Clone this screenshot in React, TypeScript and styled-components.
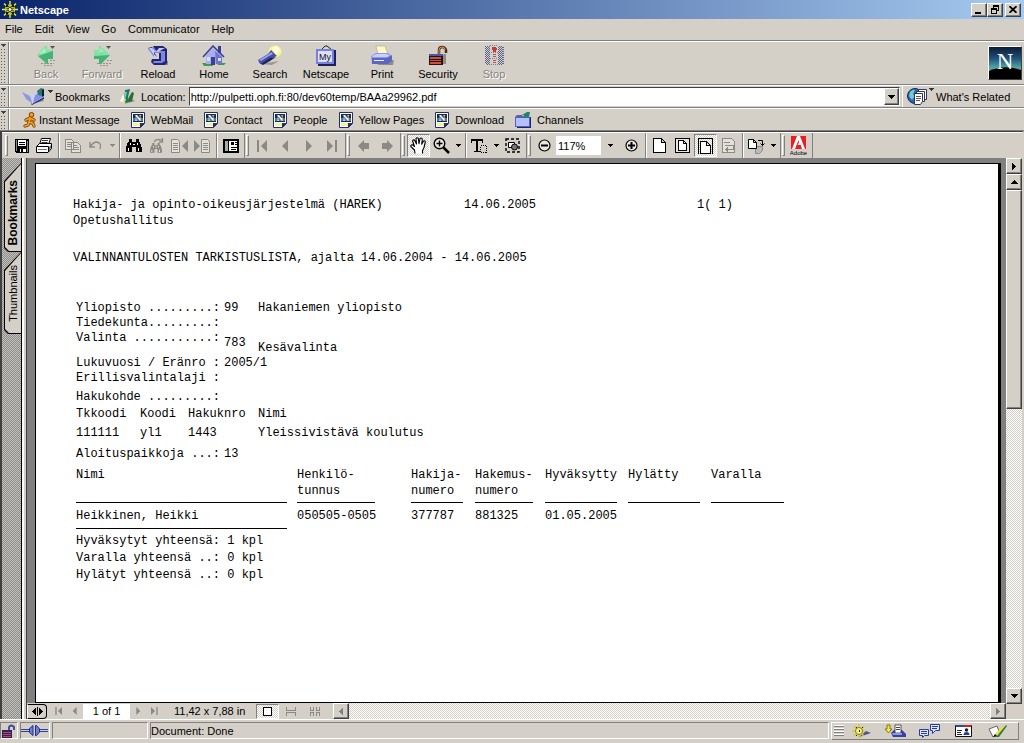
import React from "react";
import styled, { createGlobalStyle, css } from "styled-components";

const face = "#d4d0c8";
const shade = "#808080";
const dark = "#404040";

const raised = css`
  border: 1px solid;
  border-color: #fff ${dark} ${dark} #fff;
  box-shadow: inset -1px -1px 0 ${shade};
`;

const dither = css`
  background: repeating-conic-gradient(#fff 0 25%, ${face} 0 50%) 0 0 / 2px 2px;
`;

const GlobalStyle = createGlobalStyle`
  *, *::before, *::after { box-sizing: border-box; }
  body { margin: 0; background: ${face}; overflow: hidden; }
  body, button, input { font: 11px/14px "Liberation Sans", Arial, sans-serif; color: #000; }
  button { margin: 0; padding: 0; border: 0; background: none; white-space: nowrap; }
  input { margin: 0; padding: 0; border: 0; border-radius: 0; outline: 0; background: #fff; min-width: 0; }
  svg { display: block; flex: none; }
`;

/* ---------- window frame ---------- */

const Window = styled.div`
  display: flex;
  flex-direction: column;
  min-height: 100vh;
  background: ${face};
`;

const TitleBar = styled.header`
  display: flex;
  align-items: center;
  height: 19px;
  padding: 0 3px 0 2px;
  background: linear-gradient(90deg, #0a246a, #a6caf0);
`;

const Title = styled.h1`
  flex: 1;
  margin: 0 0 0 2px;
  font-size: 11px;
  line-height: 14px;
  color: #fff;
`;

const CaptionButton = styled.button<{ $gap?: boolean }>`
  ${raised}
  display: grid;
  place-items: center;
  width: 16px;
  height: 14px;
  margin-left: ${(p) => (p.$gap ? 2 : 0)}px;
  background: ${face};
`;

const MenuBar = styled.nav`
  display: flex;
  align-items: center;
  gap: 12px;
  height: 22px;
  padding: 0 5px 1px;
  border-bottom: 1px solid ${shade};
`;

/* ---------- Netscape toolbars ---------- */

const Bar = styled.div<{ $h: number }>`
  display: flex;
  align-items: center;
  height: ${(p) => p.$h}px;
  border-top: 1px solid #fff;
  border-bottom: 1px solid ${shade};
`;

const Grip = styled.button`
  display: flex;
  flex-direction: column;
  align-self: stretch;
  width: 9px;
  padding: 2px 0 1px 1px;
  border-right: 1px solid ${shade};
  box-shadow: 1px 0 0 #fff;
  &::after {
    content: "";
    flex: 1;
    width: 5px;
    margin-top: 2px;
    background: conic-gradient(from 0deg at 1px 1px, ${face} 75%, #5a5750 0) 0 0 / 3px 3px;
  }
`;

const NavButtons = styled.div`
  display: flex;
  flex: 1;
  padding-left: 9px;
`;

const NavButton = styled.button`
  display: flex;
  flex-direction: column;
  align-items: center;
  gap: 1px;
  width: 56px;
  &:disabled {
    color: #85827c;
    text-shadow: 1px 1px 0 #fff;
  }
`;

const Throbber = styled.a`
  ${raised}
  margin-right: 2px;
`;

const BookmarksButton = styled.button`
  display: flex;
  align-items: center;
  width: 98px;
  margin: 0 0 0 13px;
  gap: 2px;
`;

const HighDrop = styled.span`
  align-self: flex-start;
  padding-top: 2px;
`;

const LocationLabel = styled.label`
  display: flex;
  align-items: center;
  gap: 6px;
  margin-right: 3px;
`;

const LocationBox = styled.div`
  display: flex;
  flex: 1;
  height: 19px;
  border: 1px solid;
  border-color: ${dark} #fff #fff ${dark};
  background: #fff;
`;

const LocationInput = styled.input`
  flex: 1;
  padding-left: 1px;
`;

const DropButton = styled.button`
  ${raised}
  display: grid;
  place-items: center;
  width: 15px;
  background: ${face};
`;

const Related = styled.button`
  display: flex;
  align-items: center;
  align-self: stretch;
  gap: 2px;
  width: 122px;
  margin-left: 2px;
  padding-left: 4px;
  border-left: 1px solid #fff;
`;

const PersonalLinks = styled.div`
  display: flex;
  gap: 11px;
  padding-left: 14px;
`;

const PersonalLink = styled.a<{ $tight?: boolean }>`
  display: flex;
  align-items: center;
  gap: ${(p) => (p.$tight ? 2 : 6)}px;
  color: #000;
  text-decoration: none;
`;

/* ---------- Acrobat viewer ---------- */

const Viewer = styled.main`
  display: flex;
  flex: 1;
  flex-direction: column;
  border: 1px solid ${dark};
  border-width: 1px 2px 0 2px;
  border-right-color: ${face};
`;

const AcroBar = styled.div`
  display: flex;
  height: 26px;
  padding-left: 2px;
  border-top: 1px solid #fff;
`;

const AcroGroup = styled.div`
  display: flex;
  align-items: center;
  padding-right: 2px;
  border-right: 1px solid ${shade};
  &::before {
    content: "";
    align-self: stretch;
    width: 3px;
    margin: 2px 2px 2px 1px;
    border: 1px solid;
    border-color: #fff ${shade} ${shade} #fff;
  }
`;

const AcroButton = styled.button<{ $w?: number; $on?: boolean }>`
  display: grid;
  place-items: center;
  width: ${(p) => p.$w ?? 23}px;
  height: 23px;
  ${(p) =>
    p.$on &&
    css`
      ${dither}
      border: 1px solid;
      border-color: ${shade} #fff #fff ${shade};
    `}
`;

const AcroSep = styled.span`
  align-self: stretch;
  width: 5px;
  background: linear-gradient(90deg, transparent 2px, ${shade} 2px 3px, #fff 3px 4px, transparent 4px);
`;

const ZoomInput = styled.input`
  width: 45px;
  height: 19px;
  padding-left: 2px;
`;

const Work = styled.div`
  display: flex;
  flex: 1;
`;

const TabStrip = styled.div`
  width: 20px;
  padding: 5px 0 0 2px;
  border-right: 1px solid #000;
  background: repeating-conic-gradient(#8c8c8c 0 25%, #c4c1ba 0 50%) 0 0 / 2px 2px;
`;

const SideTab = styled.button<{ $h: number; $active?: boolean }>`
  position: relative;
  z-index: 0;
  display: flex;
  align-items: center;
  justify-content: flex-end;
  width: 17px;
  height: ${(p) => p.$h}px;
  padding: ${(p) => (p.$active ? "0 0 7px" : "0 0 12px")};
  flex-direction: column;
  font-weight: ${(p) => (p.$active ? 700 : 400)};
  font-size: ${(p) => (p.$active ? 12 : 11)}px;
  &::before,
  &::after {
    content: "";
    position: absolute;
    z-index: -1;
    inset: 0;
    background: #000;
    clip-path: polygon(100% 0, 0 18px, 0 calc(100% - 4px), 4px 100%, 100% 100%);
  }
  &::after {
    inset: 1px 0 1px 1px;
    background: ${face};
  }
  span {
    writing-mode: vertical-rl;
    transform: rotate(180deg);
  }
`;

const Splitter = styled.div`
  width: 5px;
  border-left: 2px solid #fff;
  border-right: 1px solid ${dark};
  background: ${face};
`;

const Center = styled.div`
  display: flex;
  flex: 1;
  flex-direction: column;
  min-width: 0;
`;

const Desk = styled.div`
  display: flex;
  flex: 1;
  padding: 5px 5px 0 8px;
  background: ${shade};
`;

const Paper = styled.article`
  flex: 1;
  min-width: 0;
  padding: 33px 0 0 37px;
  border: solid #000;
  border-width: 1px 3px 1px 1px;
  background: #fff;
  font: 12px/16px "Liberation Mono", "Courier New", monospace;
  white-space: pre;
`;

const ScrollColumn = styled.div`
  display: flex;
  flex-direction: column;
  width: 16px;
  padding-bottom: 15px;
`;

const ScrollButton = styled.button`
  ${raised}
  display: grid;
  place-items: center;
  width: 16px;
  height: 16px;
  background: ${face};
`;

const ScrollTrack = styled.div`
  ${dither}
  flex: 1;
`;

const ScrollThumb = styled.div`
  ${raised}
  height: 44%;
  background: ${face};
`;

const ScrollRow = styled.div`
  display: flex;
  flex: 1;
  margin-left: 6px;
`;

const PageNav = styled.div`
  display: flex;
  align-items: center;
  height: 16px;
`;

const PaneToggle = styled.button`
  display: grid;
  place-items: center;
  width: 20px;
  height: 15px;
  border: 1px solid #000;
  border-left-color: #fff;
  border-radius: 0 4px 4px 0;
  margin-right: 4px;
`;

const PageNavButton = styled.button<{ $w: number; $on?: boolean }>`
  display: grid;
  place-items: center;
  width: ${(p) => p.$w}px;
  height: 15px;
  ${(p) =>
    p.$on &&
    css`
      ${dither}
      border: 1px solid;
      border-color: ${shade} #fff #fff ${shade};
    `}
`;

const PageInput = styled.input`
  width: 47px;
  height: 15px;
  text-align: center;
`;

const PaperSize = styled.span`
  width: 94px;
  padding-left: 12px;
  white-space: nowrap;
`;

/* ---------- printed report ---------- */

const ReportHead = styled.header`
  display: grid;
  grid-template-columns: 391px 233px auto;
  margin-bottom: 21px;
`;

const ReportTitle = styled.h2`
  margin: 0 0 35px;
  font: inherit;
`;

const ReportBody = styled.section`
  padding-left: 3px;
`;

const Fields = styled.dl`
  margin: 0 0 4px;
`;

const Field = styled.div<{ $h?: number }>`
  display: grid;
  grid-template-columns: 148px 34px auto;
  height: ${(p) => p.$h ?? 15}px;
  line-height: 15px;
  dd {
    margin: 0;
    align-self: center;
  }
  dd + dd {
    align-self: end;
  }
`;

const CodeTable = styled.table`
  table-layout: fixed;
  width: 400px;
  border-collapse: collapse;
  margin-bottom: 5px;
  th,
  td {
    height: 19px;
    padding: 0;
    font-weight: 400;
    text-align: left;
  }
`;

const ResultTable = styled.table`
  table-layout: fixed;
  width: 708px;
  margin-top: 5px;
  border-spacing: 0;
`;

const HeadCell = styled.th<{ $w: number; $gap: number }>`
  width: ${(p) => p.$w}px;
  height: 36px;
  padding: 0 ${(p) => p.$gap}px 0 0;
  font-weight: 400;
  text-align: left;
  vertical-align: top;
  span {
    display: block;
    height: 36px;
    border-bottom: 1px solid #000;
  }
`;

const BodyCell = styled.td`
  height: 26px;
  padding: 0;
  vertical-align: top;
  span {
    display: block;
    height: 26px;
    padding-top: 5px;
  }
  &:first-child span {
    width: 211px;
    border-bottom: 1px solid #000;
  }
`;

const Sums = styled.div`
  padding-top: 4px;
  line-height: 17px;
`;

/* ---------- status bar ---------- */

const StatusBar = styled.footer`
  display: flex;
  align-items: center;
  gap: 2px;
  height: 24px;
  padding: 1px 5px 3px 0;
  border-top: 1px solid #fff;
`;

const StatusBox = styled.div<{ $w?: number }>`
  display: flex;
  align-items: center;
  ${(p) => (p.$w ? `width: ${p.$w}px;` : "flex: 1;")}
  height: 17px;
  border: 1px solid;
  border-color: ${shade} #fff #fff ${shade};
`;

const ComponentBar = styled.div`
  display: flex;
  align-items: center;
  height: 18px;
  width: 188px;
  border: 1px solid;
  border-color: #fff ${shade} ${shade} #fff;
  &::before {
    content: "";
    width: 10px;
    height: 12px;
    margin: 0 0 0 2px;
    background: repeating-linear-gradient(#fff 0 1px, ${shade} 1px 2px, ${face} 2px 3px);
  }
`;

const ComponentButton = styled.button`
  display: grid;
  place-items: center;
  width: 34px;
`;

/* ---------- icons ---------- */

type IconProps = { w: number; h: number; crisp?: boolean; children: React.ReactNode };
const Icon = ({ w, h, crisp, children }: IconProps) => (
  <svg width={w} height={h} viewBox={`0 0 ${w} ${h}`} shapeRendering={crisp ? "crispEdges" : undefined} aria-hidden="true">
    {children}
  </svg>
);

const Arrow = ({ dir, color = "#000" }: { dir: "up" | "down" | "left" | "right"; color?: string }) =>
  dir === "up" || dir === "down" ? (
    <Icon w={7} h={4} crisp>
      <path fill={color} d={dir === "down" ? "M0 0h7v1H6v1H5v1H4v1H3V3H2V2H1V1H0z" : "M3 0h1v1h1v1h1v1h1v1H0V3h1V2h1V1h1z"} />
    </Icon>
  ) : (
    <Icon w={4} h={7} crisp>
      <path fill={color} d={dir === "right" ? "M0 0h1v1h1v1h1v1h1v1H3v1H2v1H1v1H0z" : "M4 0v7H3V6H2V5H1V4H0V3h1V2h1V1h1V0z"} />
    </Icon>
  );

const SmallDrop = ({ color = "#000" }: { color?: string }) => (
  <Icon w={5} h={3} crisp>
    <path fill={color} d="M0 0h5v1H4v1H3v1H2V2H1V1H0z" />
  </Icon>
);

const Corner = () => <path fill="#555" d="M17 1h5l-2.500 3z" />;

const Wheel = () => (
  <Icon w={16} h={17}>
    <circle cx="8" cy="8.500" r="6.500" fill="#1c2a14" />
    <path stroke="#e8ec4c" strokeWidth="1.400" d="M8 0v17M0 8.500h16M2 2.500l12 12M14 2.500l-12 12" />
    <circle cx="8" cy="8.500" r="4.500" fill="none" stroke="#b8cc50" strokeWidth="1.400" />
    <circle cx="8" cy="8.500" r="2" fill="#fff" stroke="#2a3010" />
    <path fill="#151500" d="M4 4h2v2H4zM10 4h2v2h-2zM4 11h2v2H4zM10 11h2v2h-2z" />
  </Icon>
);

const navIcons: Record<string, React.ReactNode> = {
  Back: (
    <Icon w={26} h={21}>
      <path fill="none" stroke="#96938c" strokeDasharray="2 1" d="M8 18.500h13M11 20.500h8M17 15.500h6" />
      <path fill="#7fe3a4" d="M4 10 12 1l2 0v4h6v9h-5v5h-1z" />
      <path fill="#3aa56d" d="m5 11 15-5v8h-5v5h-1z" opacity=".8" />
      <path fill="#a9f3c2" d="m6 9 6-6 1 4z" />
      <Corner />
    </Icon>
  ),
  Forward: (
    <Icon w={26} h={21}>
      <path fill="none" stroke="#96938c" strokeDasharray="2 1" d="M8 18.500h14M11 20.500h9M18 15.500h5" />
      <path fill="#7fe3a4" d="M5 5h5V1h1l10 9-9 9h-2v-5H5z" />
      <path fill="#3aa56d" d="M5 11l16-1-9 9h-2v-5H5z" opacity=".8" />
      <path fill="#a9f3c2" d="M6 6h5V3l4 4z" />
      <Corner />
    </Icon>
  ),
  Reload: (
    <Icon w={26} h={21}>
      <path fill="#8f8c86" d="m8 18 3 2h12v-4h-3z" />
      <path fill="#23266f" d="M8 1h10l4 3v14l-2 2H9l-3-3 1-3h7V7H9l3 5L3 3l4-1 3 3z" />
      <path fill="#7d87e6" d="M5 3h4l3 3h8v10l-3 2H8l1-2h7V8H9v4L3 4z" />
      <path fill="#c5caff" d="M4 3h3l4 4 3-4h6l-7 4H9v3z" />
    </Icon>
  ),
  Home: (
    <Icon w={26} h={21}>
      <path fill="#3d9c46" d="M1 18h9l2 3H3zM16 18h9l-2 2h-6z" />
      <path fill="#a8aeee" d="M5 10 12 3l9 8v8H5z" />
      <path fill="#6e76c8" d="m14 6 7 6v7h-6z" />
      <path fill="#39408f" d="M17 1h3v7h-3zM10 12h4v8h-4z" />
      <path fill="none" stroke="#343c96" strokeWidth="1.500" d="m2 12 10-11 11 11" />
      <path fill="#d8dcff" d="M6 12h3v4H6zM17 13h3v3h-3z" />
    </Icon>
  ),
  Search: (
    <Icon w={26} h={21}>
      <ellipse cx="18" cy="6.500" rx="6.500" ry="6" fill="#f8f490" />
      <path fill="#fffee0" d="m15 3 5-2 3 4-4 5z" />
      <path fill="#9a9790" d="m4 19 18-3-7 4z" />
      <path fill="#454da8" d="m1 15 10-6 3-4 6 6-5 2-8 6-4 0z" />
      <path fill="#9ba4f2" d="m2 15 10-6 2-2 2 2-4 2-8 5z" />
      <path fill="#1e2258" d="m4 19 9-6 6-1-6 4-7 4z" />
    </Icon>
  ),
  Netscape: (
    <Icon w={26} h={21}>
      <path fill="none" stroke="#222" d="m8 5 4-4h2l5 4" />
      <path fill="#1d2153" d="M5 5h18v16H5z" />
      <path fill="#7781df" d="M3 4h18v15H3z" />
      <path fill="#dce0ff" d="M5 6h14v11H5z" />
      <text x="12" y="15" fontSize="9" fontFamily="Liberation Sans" textAnchor="middle" fill="#111">
        My
      </text>
    </Icon>
  ),
  Print: (
    <Icon w={26} h={21}>
      <path fill="#fff7c4" stroke="#aaa68c" strokeWidth=".6" d="M7 1h9l3 8H9z" />
      <path fill="#8f8c86" d="m6 18 4 2h14l1-5z" />
      <path fill="#8d96ee" d="m2 11 5-3h12l4 3v5l-4 3H3z" />
      <path fill="#cbd0ff" d="m3 11 5-2h10l3 2-4 1H4z" />
      <path fill="#5059b4" d="M3 13h15l5-3v6l-4 3H3z" opacity=".8" />
      <path fill="#eef" d="M5 15h10v1H5z" />
    </Icon>
  ),
  Security: (
    <Icon w={26} h={21}>
      <path fill="#8f8c86" d="M8 19h13V9h-2z" />
      <path fill="none" stroke="#4b2a14" strokeWidth="2.500" d="M14 10V5q0-3 3-3t4 3v3" />
      <path fill="none" stroke="#d49a5c" d="M14 9V5q0-3 3-3t3 3" />
      <path fill="#2b1010" d="M4 9h14v11H4z" />
      <path fill="#c5563f" d="M5 12h11v2H5zM5 15h11v1H5zM5 17h11v2H5z" />
      <path fill="#4754b4" d="M4 9h14v2H4z" />
    </Icon>
  ),
  Stop: (
    <Icon w={26} h={21}>
      <path fill="none" stroke="#5c608c" strokeDasharray="1 1" d="M4.500 1v18M6.500 1v19M8.500 1v19M18.500 1v19M20.500 1v19M22.500 2v17" />
      <path fill="none" stroke="#5c608c" strokeDasharray="1 1" d="M5.500 2v17M7.500 2v18M17.500 2v18M19.500 2v18M21.500 2v18" />
      <path fill="none" stroke="#7c7f9c" strokeDasharray="1 1" d="M9 .5h8M10 7.500h7M9 13.500h8M10 19.500h7" />
      <path fill="#c63a3a" d="M11 2h4v1h1v2h-1v2h-3V5h-1z" />
      <path stroke="#b0545c" strokeWidth="3" strokeDasharray="1 1" d="M13.500 9v4M13.500 15v4" />
    </Icon>
  ),
};

const NLogo = () => (
  <Icon w={32} h={32}>
    <defs>
      <linearGradient id="sky" x1="0" y1="0" x2="0" y2="1">
        <stop offset="0" stopColor="#0b1b33" />
        <stop offset=".35" stopColor="#1f4f78" />
        <stop offset=".65" stopColor="#54a8a4" />
      </linearGradient>
    </defs>
    <path fill="url(#sky)" d="M0 0h32v32H0z" />
    <path fill="#000" d="M0 24q16-7 32-1v9H0z" />
    <text x="16" y="22" fontSize="23" fontFamily="Liberation Serif" textAnchor="middle" fill="#fff">
      N
    </text>
  </Icon>
);

const NPage = () => (
  <Icon w={14} h={16}>
    <path fill="#fff" stroke="#26305c" d="M.5.5h13v11l-4 4h-9z" />
    <path fill="#1b2950" d="M2 2h10v8H2z" />
    <path fill="#46808a" d="M2 6h10v3H2z" />
    <path fill="#f3efa8" d="M2 11h7v3H2z" />
    <path fill="#26305c" d="m14 11-5 5v-5z" />
    <text x="7" y="9" fontSize="9" fontWeight="700" fontFamily="Liberation Serif" textAnchor="middle" fill="#fff">
      N
    </text>
  </Icon>
);

const Runner = () => (
  <Icon w={14} h={16}>
    <g fill="none" stroke="#7a3a00" strokeWidth="3.200" strokeLinecap="round" strokeLinejoin="round">
      <path d="M7.500 6 6 10l4 1.500 1 2.500M6 10l-1 3-3 1M3 8l4-2 4 2" />
    </g>
    <circle cx="8.500" cy="2.800" r="2.300" fill="#f6a01c" stroke="#7a3a00" />
    <g fill="none" stroke="#f6a01c" strokeWidth="1.800" strokeLinecap="round" strokeLinejoin="round">
      <path d="M7.500 6 6 10l4 1.500 1 2.500M6 10l-1 3-3 1M3 8l4-2 4 2" />
    </g>
  </Icon>
);

const BookmarkIcon = () => (
  <Icon w={24} h={17}>
    <path fill="#8a8780" d="m8 16 14-3-2-2z" />
    <path fill="#2c327c" d="m9 16 13-7 0 2-12 6z" />
    <path fill="#8d98e8" d="m0 4 8 4 3 8-7-5z" />
    <path fill="#c9d0ff" d="m9 8 6-4 6 5-11 7z" />
    <path fill="#8490e4" d="m13 7 4-2 4 4-10 6z" />
    <path fill="#247a72" d="m15 3 4-3 3 1-2 7-4-1z" />
    <path fill="#111a3a" d="m20 2 2-1 0 7-2 1z" />
  </Icon>
);

const LocationIcon = () => (
  <Icon w={15} h={17}>
    <path fill="#8a8780" d="m4 16 11-3-4-2z" />
    <path fill="#fff" d="m0 13 3-6 3 2-2 6z" />
    <path fill="#1c7a68" d="m5 2 5-1-2 8 2 4-4 2-2-2z" />
    <path fill="#7ad0b4" d="m5 4 2 0-2 8-1-1z" />
    <path fill="#2f6f2a" d="m9 9 3-5 2 1-2 8-3 1z" />
    <path fill="#e4e46a" d="m2 14 3-4 1 2-2 3z" />
  </Icon>
);

const RelatedIcon = () => (
  <Icon w={20} h={17}>
    <circle cx="8" cy="8" r="7.500" fill="#2d63b8" stroke="#14245c" />
    <path fill="#6fd0c8" d="M3 4q3-3 5-2L6 6l2 2-3 4-3-4z" />
    <g fill="#fff" stroke="#30345c">
      <path d="M11.500 1.500h8v10h-8z" />
      <path d="M9.500 3.500h8v10h-8z" />
      <path d="M7.500 5.500h8v8l-2 3h-6z" />
    </g>
    <path stroke="#555" d="M9 8.500h5M9 10.500h5M9 12.500h4" />
  </Icon>
);

const FolderIcon = () => (
  <Icon w={16} h={16}>
    <path fill="#1f2663" d="M2 5h14v11H2z" />
    <path fill="#5560b8" d="M0 5 2 3h5l2 2h6v10H0z" />
    <path fill="#b4bfff" d="M1 6h13v8H1z" />
    <path fill="#27806c" d="m8 6 1-3-2 0 5-3h3l-1 5-3 1z" />
  </Icon>
);

const gray = "#8b8984";

const SaveIcon = () => (
  <Icon w={14} h={14} crisp>
    <path fill="#000" d="M0 0h14v14H1l-1-1z" />
    <path fill="#fff" d="M3 1h8v6H3zM5 10h6v3H5z" />
    <path fill="#000" d="M4 3h6v1H4zM4 5h6v1H4zM6 10h2v3H6z" />
    <path fill="#888" d="M1 1h1v11H1zM12 2h1v11h-1z" />
  </Icon>
);
const PrinterIcon = () => (
  <Icon w={17} h={15}>
    <path fill="#fff" stroke="#000" d="M5.500.5h9l-2 6h-9z" />
    <path stroke="#000" strokeWidth=".8" d="M6 2.500h6M5.500 4.500h6" />
    <path fill="#fff" stroke="#000" d="m.5 8.500 3-3h12v5l-3.500 4H.5z" />
    <path fill="#777" d="m13 9 2-2v3l-2 3z" />
    <path stroke="#000" d="M1 8.500h11.500V14" fill="none" />
    <path stroke="#777" d="M2 11.500h9" />
  </Icon>
);
const CopyIcon = () => (
  <Icon w={16} h={14} crisp>
    <path fill="#e4e1da" stroke={gray} d="M.5.5h6l2 2v8h-8zM6.500 3.500h6l3 3v7h-9z" />
    <path stroke={gray} d="M2 3.500h4M2 5.500h4M2 7.500h4M8 6.500h4M8 8.500h6M8 10.500h6" />
  </Icon>
);
const UndoIcon = () => (
  <Icon w={13} h={9}>
    <path fill="none" stroke={gray} strokeWidth="1.300" d="M1 1v5h5M1 6q3-5 7-5 5 1 3 7" />
  </Icon>
);
const FindIcon = ({ again }: { again?: boolean }) => {
  const c = again ? gray : "#000";
  return (
    <Icon w={16} h={15} crisp={!again}>
      {again && <path fill="none" stroke={gray} strokeWidth="1.300" d="M5 4q2-4 8-1.500M13.500 0v4H10" />}
      <g transform={again ? "translate(1 5) scale(.75)" : "translate(0 1)"}>
        <path fill={c} d="M3 0h3v3h4V0h3v3h1l2 6v4h-6V8H6v5H0V9l2-6h1z" />
        <path fill="#fff" d="M2 9h1v3H2zM12 9h1v3h-1zM4 4h1v2H4zM11 4h1v2h-1zM7 5h2v1H7z" />
      </g>
    </Icon>
  );
};
const HitIcon = ({ next }: { next?: boolean }) => (
  <Icon w={17} h={14}>
    <g transform={next ? "translate(7 0)" : undefined}>
      <path fill="#e4e1da" stroke={gray} d="M.5.5h6l2 2v11h-8z" />
      <path stroke={gray} d="M2 4.500h5M2 6.500h5M2 8.500h5M2 10.500h5" />
    </g>
    <path fill={gray} d={next ? "M0 1v12l6-6z" : "M17 1v12l-6-6z"} />
  </Icon>
);
const PaneIcon = () => (
  <Icon w={16} h={14} crisp>
    <path fill="#fff" stroke="#000" strokeWidth="2" d="M1 1h14v12H1z" />
    <path fill="#000" d="M5 1h1v12H5zM8 3h3v3H8zM12 3h2v1h-2zM12 5h2v1h-2zM8 8h6v1H8zM8 10h5v1H8z" />
    <path fill="#aaa" d="M2 2h3v10H2z" />
  </Icon>
);
const Step = ({ dir, end, small }: { dir: "left" | "right"; end?: boolean; small?: boolean }) => (
  <svg width={small ? 8 : 11} height={small ? 8 : 12} viewBox="0 0 11 12" aria-hidden="true">
    <g fill={gray} transform={dir === "right" ? "translate(11 0) scale(-1 1)" : undefined}>
      {end && <path d="M0 0h2v12H0z" />}
      <path d={end ? "M10 0v12L4 6z" : "M8 0v12L2 6z"} />
    </g>
  </svg>
);
const FatArrow = ({ flip }: { flip?: boolean }) => (
  <Icon w={12} h={12}>
    <path fill={gray} transform={flip ? "translate(12 0) scale(-1 1)" : undefined} d="m0 6 6-6v3h5v6H6v3z" />
  </Icon>
);
const HandIcon = () => (
  <Icon w={17} h={17}>
    <path
      fill="#fff"
      stroke="#000"
      strokeWidth="1.100"
      strokeLinejoin="round"
      d="M5 16.500 4.500 13 .8 9.300Q.6 7.600 2.400 7.800L4.500 9.500 2.600 4Q3 2.200 4.600 3.200L6.500 7 6 1.500Q7 0 8.300 1.300L9 6.600 10 1.500Q11.400.4 12.300 2L11.700 7.300 13.600 4Q15.300 3.300 15.300 5L14 10.500 12.500 13.500V16.500"
    />
  </Icon>
);
const MagnifyIcon = () => (
  <Icon w={17} h={17}>
    <circle cx="6.500" cy="6.500" r="5.300" fill="#e8e6e0" stroke="#000" strokeWidth="1.400" />
    <path stroke="#000" strokeWidth="1.400" d="M3.500 6.500h6M6.500 3.500v6" />
    <path stroke="#000" strokeWidth="2.500" d="m10.500 10.500 5.500 5.500" />
  </Icon>
);
const TextSelectIcon = () => (
  <Icon w={17} h={16} crisp>
    <path fill="#000" d="M0 1h12v4h-1V3H7v10h2v1H3v-1h2V3H1v2H0z" />
    <path fill="none" stroke="#000" strokeDasharray="1 1" d="M9.500 7.500h6v7h-6z" />
  </Icon>
);
const GraphicSelectIcon = () => (
  <Icon w={15} h={15}>
    <path fill="none" stroke="#000" strokeWidth="1.400" strokeDasharray="3 2" d="M1 1h13v13H1z" />
    <path fill="#fff" stroke="#000" d="M3.500 4.500h6v5h-6z" />
    <circle cx="9.500" cy="9" r="3" fill="#777" stroke="#000" />
  </Icon>
);
const ZoomStep = ({ plus }: { plus?: boolean }) => (
  <Icon w={13} h={13}>
    <circle cx="6.500" cy="6.500" r="5.500" fill="#e8e6e0" stroke="#000" strokeWidth="1.200" />
    <path stroke="#000" strokeWidth="2" d={plus ? "M3 6.500h7M6.500 3v7" : "M3 6.500h7"} />
  </Icon>
);
const PageIcon = ({ kind }: { kind: "actual" | "fit" | "width" | "reflow" }) => (
  <Icon w={17} h={17} crisp>
    {kind === "actual" && <path fill="#fff" stroke="#000" d="M2.500 1.500h8l4 4v10h-12zM10.500 1.500v4h4" />}
    {kind === "fit" && (
      <>
        <path fill="#e8e6e0" stroke="#000" d="M1.500 1.500h14v14h-14z" />
        <path fill="#fff" stroke="#000" d="M4.500 3.500h5l3 3v7h-8zM9.500 3.500v3h3" />
      </>
    )}
    {kind === "width" && (
      <>
        <path fill="none" stroke="#000" d="M1.500 16.500v-15h14v15" />
        <path fill="#fff" stroke="#000" d="M3.500 16.500v-12h6l4 4v8zM9.500 4.500v4h4" />
      </>
    )}
    {kind === "reflow" && (
      <>
        <path fill="#e4e1da" stroke={gray} d="M2.500 1.500h9l3 3v11h-12z" />
        <path fill="none" stroke={gray} d="M4 5.500h6M5 8.500h8v4H6M8 10.500l-2 2 2 2" />
      </>
    )}
  </Icon>
);
const RotateIcon = () => (
  <Icon w={17} h={16}>
    <path fill="#bbb" stroke={gray} d="M7.500 8.500h7v4l-3 3h-4z" />
    <path fill="#fff" stroke="#000" d="M.5 1.500h5l3 3v6h-8zM5.500 1.500v3h3" />
    <path fill="none" stroke="#000" d="M10 2.500h4.500v5M12.500 5.500l2 2 2-2" />
  </Icon>
);
const AdobeIcon = () => (
  <Icon w={17} h={20}>
    <path fill="#ee1c25" d="M1 0h15v13H1z" />
    <path fill="#fff" d="M7 0h3l5 13h-3l-1.300-4H7.500L9 6.500 8.500 4 5 13H2z" />
    <text x="8.500" y="19" fontSize="6" fontFamily="Liberation Sans" textAnchor="middle" fill="#000">
      Adobe
    </text>
  </Icon>
);

const LockIcon = () => (
  <Icon w={15} h={14}>
    <path fill="none" stroke="#3a4193" strokeWidth="1.800" d="M8 7V3q2-3 5 0v3" />
    <path fill="#30206a" d="M1 6h10v8H1z" />
    <path fill="#c04a48" d="M2 8h8v1H2zM2 10h8v1H2zM2 12h8v1H2z" />
  </Icon>
);
const PlugIcon = () => (
  <Icon w={27} h={11}>
    <path stroke="#2f3fa0" d="M0 4.500h8M0 6.500h8M18 4.500h9M18 6.500h9" />
    <path fill="#6e80dc" stroke="#1e2a84" d="M8.500 3.500 12 .5v10L8.500 7.500zM14.500.5h1L18.500 4v3l-3 3.500h-1z" />
  </Icon>
);

const componentIcons = [
  {
    name: "Navigator",
    icon: (
      <Icon w={20} h={14}>
        <path fill="#4a52a8" d="m8 13 12-4-5-2z" />
        <path stroke="#d8cc20" strokeWidth="1.500" d="M8 0v14M1 7h14M3 2l10 10M13 2 3 12" />
        <circle cx="8" cy="7" r="3.500" fill="#f4f0a0" stroke="#8a8000" />
        <path fill="#222" d="M5 3h1v1H5zM11 3h1v1h-1zM5 11h1v1H5zM8 6h1v2H8z" />
      </Icon>
    ),
  },
  {
    name: "Inbox",
    icon: (
      <Icon w={22} h={14}>
        <path fill="#f5e83c" stroke="#6a5c00" strokeWidth=".8" d="M3 1h3v4h2L4.500 9 1 5h2z" />
        <path fill="#3940a0" d="m7 9 3-3h8l4 4v3H9z" />
        <path fill="#fff" stroke="#333" strokeWidth=".8" d="M11 1h6v8h-6z" />
        <path stroke="#444" d="M12 3.500h4M12 5.500h4" />
        <path fill="#8d98ea" d="M8 9h10v2H9z" />
      </Icon>
    ),
  },
  {
    name: "Newsgroups",
    icon: (
      <Icon w={23} h={14}>
        <path fill="#dfe6ff" stroke="#2b3a9c" d="M1.500 5.500h9v6h-4l-2 2v-2h-3z" />
        <path fill="#dfe6ff" stroke="#2b3a9c" d="M12.500.5h9v6h-4l-3 3v-3h-2z" />
        <path stroke="#2b3a9c" d="M3 7.500h6M3 9.500h6M14 2.500h6M14 4.500h5" />
      </Icon>
    ),
  },
  {
    name: "Address Book",
    icon: (
      <Icon w={17} h={13}>
        <path fill="#fff" stroke="#111" d="M.5 1.500h16v11H.5z" />
        <path fill="#2b4aa0" d="M1 1h8v2H1z" />
        <path fill="#c22" d="M9 1h7v2H9z" />
        <path stroke="#222" d="M2 6.500h5M2 8.500h4M2 10.500h5" />
        <circle cx="11.500" cy="6" r="1.800" fill="#123" />
        <path fill="#23408c" d="M8.500 11q0-3 3-3t3 3z" />
      </Icon>
    ),
  },
  {
    name: "Composer",
    icon: (
      <Icon w={19} h={14}>
        <path fill="#fff" stroke="#444" strokeWidth=".8" d="m1 5 8-3 3 8-7 3z" />
        <path fill="#2c7a48" d="m7 13 11-12 1 1-8 11z" />
        <path fill="#e8de40" d="m6 11 9-9 2 0-8 10z" />
        <path fill="#111" d="m5 13 2-3 2 2z" />
      </Icon>
    ),
  },
];

/* ---------- data ---------- */

const menus = ["File", "Edit", "View", "Go", "Communicator", "Help"];
const navItems = ["Back", "Forward", "Reload", "Home", "Search", "Netscape", "Print", "Security", "Stop"];
const inactive = ["Back", "Forward", "Stop"];
const personal = ["WebMail", "Contact", "People", "Yellow Pages", "Download"];

const fields: { label: string; value?: string; text?: string; h?: number }[] = [
  { label: "Yliopisto .........:", value: "99", text: "Hakaniemen yliopisto" },
  { label: "Tiedekunta.........:" },
  { label: "Valinta ...........:", value: "783", text: "Kesävalinta", h: 25 },
  { label: "Lukuvuosi / Eränro :", value: "2005/1" },
  { label: "Erillisvalintalaji :" },
];

const columns = [
  { head: "Nimi", w: 221, gap: 10, value: "Heikkinen, Heikki" },
  { head: "Henkilö-\ntunnus", w: 114, gap: 36, value: "050505-0505" },
  { head: "Hakija-\nnumero", w: 64, gap: 12, value: "377787" },
  { head: "Hakemus-\nnumero", w: 70, gap: 12, value: "881325" },
  { head: "Hyväksytty", w: 83, gap: 11, value: "01.05.2005" },
  { head: "Hylätty", w: 83, gap: 11, value: "" },
  { head: "Varalla", w: 73, gap: 0, value: "" },
];

/* ---------- parts ---------- */

const BarGrip = () => (
  <Grip aria-label="Collapse toolbar">
    <SmallDrop color="#444" />
  </Grip>
);

const Report = () => (
  <Paper>
    <ReportHead>
      <div>{"Hakija- ja opinto-oikeusjärjestelmä (HAREK)\nOpetushallitus"}</div>
      <div>14.06.2005</div>
      <div>1( 1)</div>
    </ReportHead>
    <ReportTitle>VALINNANTULOSTEN TARKISTUSLISTA, ajalta 14.06.2004 - 14.06.2005</ReportTitle>
    <ReportBody>
      <Fields>
        {fields.map((f) => (
          <Field key={f.label} $h={f.h}>
            <dt>{f.label}</dt>
            <dd>{f.value}</dd>
            {f.text && <dd>{f.text}</dd>}
          </Field>
        ))}
      </Fields>
      <Field $h={14}>Hakukohde .........:</Field>
      <CodeTable>
        <colgroup>
          <col width="64" />
          <col width="48" />
          <col width="70" />
          <col />
        </colgroup>
        <thead>
          <tr>
            <th>Tkkoodi</th>
            <th>Koodi</th>
            <th>Hakuknro</th>
            <th>Nimi</th>
          </tr>
        </thead>
        <tbody>
          <tr>
            <td>111111</td>
            <td>yl1</td>
            <td>1443</td>
            <td>Yleissivistävä koulutus</td>
          </tr>
        </tbody>
      </CodeTable>
      <Field>
        <span>Aloituspaikkoja ...:</span>
        <span>13</span>
      </Field>
      <ResultTable>
        <thead>
          <tr>
            {columns.map((c) => (
              <HeadCell key={c.head} $w={c.w} $gap={c.gap}>
                <span>{c.head}</span>
              </HeadCell>
            ))}
          </tr>
        </thead>
        <tbody>
          <tr>
            {columns.map((c) => (
              <BodyCell key={c.head}>
                <span>{c.value}</span>
              </BodyCell>
            ))}
          </tr>
        </tbody>
      </ResultTable>
      <Sums>{"Hyväksytyt yhteensä: 1 kpl\nVaralla yhteensä ..: 0 kpl\nHylätyt yhteensä ..: 0 kpl"}</Sums>
    </ReportBody>
  </Paper>
);

const AcrobatToolbar = () => (
  <AcroBar role="toolbar" aria-label="Acrobat">
    <AcroGroup>
      <AcroButton aria-label="Save"><SaveIcon /></AcroButton>
      <AcroButton aria-label="Print"><PrinterIcon /></AcroButton>
      <AcroSep />
      <AcroButton aria-label="Copy" disabled><CopyIcon /></AcroButton>
      <AcroButton aria-label="Undo" disabled><UndoIcon /></AcroButton>
      <AcroButton aria-label="Undo list" disabled $w={10}><SmallDrop color={gray} /></AcroButton>
      <AcroSep />
      <AcroButton aria-label="Find"><FindIcon /></AcroButton>
      <AcroButton aria-label="Find again" disabled><FindIcon again /></AcroButton>
      <AcroButton aria-label="Previous hit" disabled><HitIcon /></AcroButton>
      <AcroButton aria-label="Next hit" disabled><HitIcon next /></AcroButton>
      <AcroSep />
      <AcroButton aria-label="Navigation pane"><PaneIcon /></AcroButton>
    </AcroGroup>
    <AcroGroup>
      <AcroButton aria-label="First page" disabled><Step dir="left" end /></AcroButton>
      <AcroButton aria-label="Previous page" disabled><Step dir="left" /></AcroButton>
      <AcroButton aria-label="Next page" disabled><Step dir="right" /></AcroButton>
      <AcroButton aria-label="Last page" disabled><Step dir="right" end /></AcroButton>
    </AcroGroup>
    <AcroGroup>
      <AcroButton aria-label="Previous view" disabled><FatArrow /></AcroButton>
      <AcroButton aria-label="Next view" disabled><FatArrow flip /></AcroButton>
    </AcroGroup>
    <AcroGroup>
      <AcroButton aria-label="Hand tool" $on><HandIcon /></AcroButton>
      <AcroButton aria-label="Zoom tool"><MagnifyIcon /></AcroButton>
      <AcroButton aria-label="Zoom tools" $w={10}><SmallDrop /></AcroButton>
      <AcroSep />
      <AcroButton aria-label="Text select"><TextSelectIcon /></AcroButton>
      <AcroButton aria-label="Select tools" $w={10}><SmallDrop /></AcroButton>
      <AcroButton aria-label="Graphics select"><GraphicSelectIcon /></AcroButton>
    </AcroGroup>
    <AcroGroup>
      <AcroButton aria-label="Zoom out"><ZoomStep /></AcroButton>
      <ZoomInput aria-label="Zoom" defaultValue="117%" />
      <AcroButton aria-label="Zoom levels" $w={19}><SmallDrop /></AcroButton>
      <AcroButton aria-label="Zoom in"><ZoomStep plus /></AcroButton>
      <AcroSep />
      <AcroButton aria-label="Actual size"><PageIcon kind="actual" /></AcroButton>
      <AcroButton aria-label="Fit in window"><PageIcon kind="fit" /></AcroButton>
      <AcroButton aria-label="Fit width" $on><PageIcon kind="width" /></AcroButton>
      <AcroButton aria-label="Reflow" disabled><PageIcon kind="reflow" /></AcroButton>
      <AcroSep />
      <AcroButton aria-label="Rotate view"><RotateIcon /></AcroButton>
      <AcroButton aria-label="Rotate options" $w={10}><SmallDrop /></AcroButton>
    </AcroGroup>
    <AcroGroup>
      <AcroButton aria-label="Adobe web site"><AdobeIcon /></AcroButton>
    </AcroGroup>
  </AcroBar>
);

export default function App() {
  return (
    <Window>
      <GlobalStyle />
      <TitleBar>
        <Wheel />
        <Title>Netscape</Title>
        <CaptionButton aria-label="Minimize">
          <Icon w={10} h={9} crisp><path fill="#000" d="M1 7h6v2H1z" /></Icon>
        </CaptionButton>
        <CaptionButton aria-label="Restore">
          <Icon w={10} h={9} crisp>
            <path fill="#000" d="M3 0h6v6H7V5h1V2H4v1H3zM1 3h6v6H1zm1 2v3h4V5z" fillRule="evenodd" />
          </Icon>
        </CaptionButton>
        <CaptionButton aria-label="Close" $gap>
          <Icon w={8} h={7}><path stroke="#000" strokeWidth="1.800" d="m.5.2 7 6.600M7.500.2l-7 6.600" /></Icon>
        </CaptionButton>
      </TitleBar>
      <MenuBar>
        {menus.map((m) => (
          <button key={m}>{m}</button>
        ))}
      </MenuBar>

      <Bar $h={44}>
        <BarGrip />
        <NavButtons>
          {navItems.map((n) => (
            <NavButton key={n} disabled={inactive.includes(n)}>
              {navIcons[n]}
              {n}
            </NavButton>
          ))}
        </NavButtons>
        <Throbber href="#home" aria-label="Netscape home">
          <NLogo />
        </Throbber>
      </Bar>

      <Bar $h={23}>
        <BarGrip />
        <BookmarksButton>
          <BookmarkIcon />
          <HighDrop><SmallDrop color="#333" /></HighDrop>
          <span>Bookmarks</span>
        </BookmarksButton>
        <LocationLabel htmlFor="location">
          <LocationIcon />
          Location:
        </LocationLabel>
        <LocationBox>
          <LocationInput id="location" defaultValue="http://pulpetti.oph.fi:80/dev60temp/BAAa29962.pdf" />
          <DropButton aria-label="Recent locations"><Arrow dir="down" /></DropButton>
        </LocationBox>
        <Related>
          <RelatedIcon />
          <HighDrop><SmallDrop color="#333" /></HighDrop>
          <span>What's Related</span>
        </Related>
      </Bar>

      <Bar $h={23}>
        <BarGrip />
        <PersonalLinks>
          <PersonalLink href="#im" $tight><Runner />Instant Message</PersonalLink>
          {personal.map((p) => (
            <PersonalLink key={p} href="#link"><NPage />{p}</PersonalLink>
          ))}
          <PersonalLink href="#channels"><FolderIcon />Channels</PersonalLink>
        </PersonalLinks>
      </Bar>

      <Viewer>
        <AcrobatToolbar />
        <Work>
          <TabStrip>
            <SideTab $h={89} $active><span>Bookmarks</span></SideTab>
            <SideTab $h={82}><span>Thumbnails</span></SideTab>
          </TabStrip>
          <Splitter />
          <Center>
            <Desk>
              <Report />
            </Desk>
            <PageNav>
              <PaneToggle aria-label="Toggle navigation pane">
                <Icon w={11} h={9} crisp>
                  <path fill="#000" d="M5 0h1v9H5zM4 1v7L0 5V4zM7 1v7l4-3V4z" />
                </Icon>
              </PaneToggle>
              <PageNavButton $w={16} aria-label="First page" disabled><Step dir="left" end small /></PageNavButton>
              <PageNavButton $w={16} aria-label="Previous page" disabled><Step dir="left" small /></PageNavButton>
              <PageInput aria-label="Page" defaultValue="1 of 1" />
              <PageNavButton $w={16} aria-label="Next page" disabled><Step dir="right" small /></PageNavButton>
              <PageNavButton $w={16} aria-label="Last page" disabled><Step dir="right" end small /></PageNavButton>
              <PaperSize>11,42 x 7,88 in</PaperSize>
              <PageNavButton $w={23} $on aria-label="Single page">
                <Icon w={10} h={9} crisp><path fill="#fff" stroke="#000" d="M.5.5h8v8h-8z" /></Icon>
              </PageNavButton>
              <PageNavButton $w={24} aria-label="Continuous">
                <Icon w={10} h={9} crisp><path fill="none" stroke={gray} d="M.5 0v3.500h9V0M.5 9V5.500h9V9" /></Icon>
              </PageNavButton>
              <PageNavButton $w={24} aria-label="Facing">
                <Icon w={10} h={9} crisp>
                  <path fill="none" stroke={gray} d="M.5 0v3.500h3V0M6.500 0v3.500h3V0M.5 9V5.500h3V9M6.500 9V5.500h3V9" />
                </Icon>
              </PageNavButton>
              <ScrollRow>
                <ScrollButton aria-label="Scroll left"><Arrow dir="left" color={shade} /></ScrollButton>
                <ScrollTrack />
                <ScrollButton aria-label="Scroll right"><Arrow dir="right" color={shade} /></ScrollButton>
              </ScrollRow>
            </PageNav>
          </Center>
          <ScrollColumn>
            <ScrollButton aria-label="Toolbar options"><Arrow dir="right" /></ScrollButton>
            <ScrollButton aria-label="Scroll up"><Arrow dir="up" /></ScrollButton>
            <ScrollTrack>
              <ScrollThumb />
            </ScrollTrack>
            <ScrollButton aria-label="Scroll down"><Arrow dir="down" /></ScrollButton>
          </ScrollColumn>
        </Work>
      </Viewer>

      <StatusBar>
        <StatusBox $w={18}><LockIcon /></StatusBox>
        <StatusBox $w={30}><PlugIcon /></StatusBox>
        <StatusBox $w={96} />
        <StatusBox>Document: Done</StatusBox>
        <ComponentBar>
          {componentIcons.map((c) => (
            <ComponentButton key={c.name} aria-label={c.name}>{c.icon}</ComponentButton>
          ))}
        </ComponentBar>
      </StatusBar>
    </Window>
  );
}
